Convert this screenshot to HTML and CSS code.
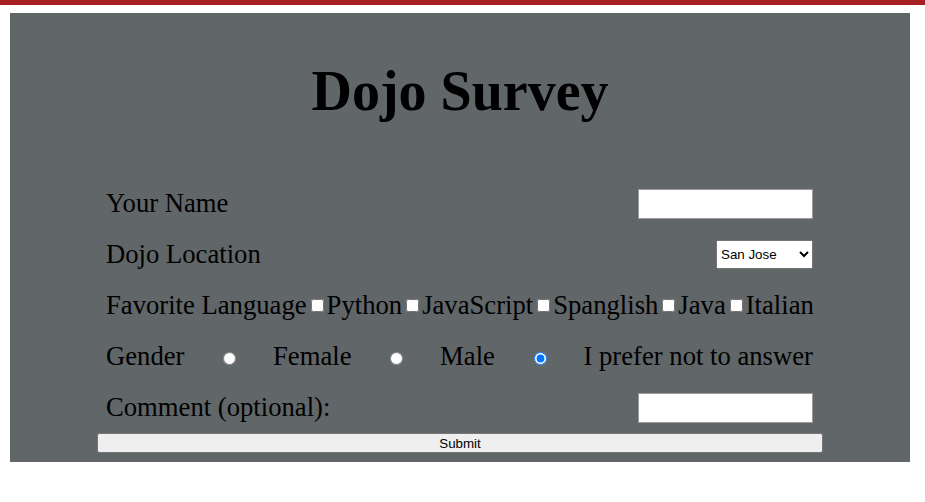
FILE: index.html
```html
<!DOCTYPE html>
<html lang="en">
<head>
<meta charset="utf-8">
<title>Dojo Survey</title>
<link rel="stylesheet" href="styles.css">
</head>
<body>
<div class="topbar"></div>
<div class="container">
  <h1 class="title">Dojo Survey</h1>
  <form class="survey">
    <div class="row">
      <label class="label" for="name">Your Name</label>
      <input class="text-input" type="text" id="name">
    </div>
    <div class="row">
      <label class="label" for="loc">Dojo Location</label>
      <select class="select" id="loc">
        <option>San Jose</option>
        <option>Seattle</option>
        <option>Chicago</option>
      </select>
    </div>
    <div class="row">
      <span class="label">Favorite Language</span>
      <input type="checkbox" class="check"><span class="label">Python</span>
      <input type="checkbox" class="check"><span class="label">JavaScript</span>
      <input type="checkbox" class="check"><span class="label">Spanglish</span>
      <input type="checkbox" class="check"><span class="label">Java</span>
      <input type="checkbox" class="check"><span class="label">Italian</span>
    </div>
    <div class="row">
      <span class="label">Gender</span>
      <input type="radio" name="g" class="radio"><span class="label">Female</span>
      <input type="radio" name="g" class="radio"><span class="label">Male</span>
      <input type="radio" name="g" class="radio" checked><span class="label">I prefer not to answer</span>
    </div>
    <div class="row">
      <label class="label" for="cmt">Comment (optional):</label>
      <input class="text-input" type="text" id="cmt">
    </div>
    <button type="submit" class="submit">Submit</button>
  </form>
</div>
</body>
</html>
```
FILE: styles.css
```css
html, body {
  margin: 0;
  padding: 0;
  background: #ffffff;
}
body {
  font-family: "Liberation Serif", "Times New Roman", serif;
  color: #000;
}
.topbar {
  height: 5px;
  background: #a71f23;
}
.container {
  width: 900px;
  margin: 8px 0 0 10px;
  background: #616669;
  padding: 46px 0 9px;
  box-sizing: border-box;
}
.title {
  margin: 0;
  text-align: center;
  font-size: 56px;
  font-weight: bold;
  line-height: 64px;
}
.survey {
  width: 726px;
  margin: 55px auto 0;
}
.row {
  height: 51px;
  display: flex;
  align-items: center;
  justify-content: space-between;
  padding: 0 10px 0 9px;
}
.label {
  font-size: 26.67px;
  line-height: 31px;
  white-space: nowrap;
}
.text-input {
  width: 175px;
  height: 30px;
  box-sizing: border-box;
  margin: 0;
  border: 1px solid #9a9a9a;
  background: #fff;
  padding: 1px 2px;
}
.select {
  width: 97px;
  height: 29px;
  margin: 0;
  font-family: "Liberation Sans", Arial, sans-serif;
  font-size: 13.33px;
}
.check {
  margin: 3px 3px 3px 4px;
}
.radio {
  margin: 3px 3px 0 5px;
}
.submit {
  display: block;
  width: 100%;
  height: 20px;
  margin: 0;
  font-family: "Liberation Sans", Arial, sans-serif;
  font-size: 13.33px;
  padding: 1px 6px;
}
```
